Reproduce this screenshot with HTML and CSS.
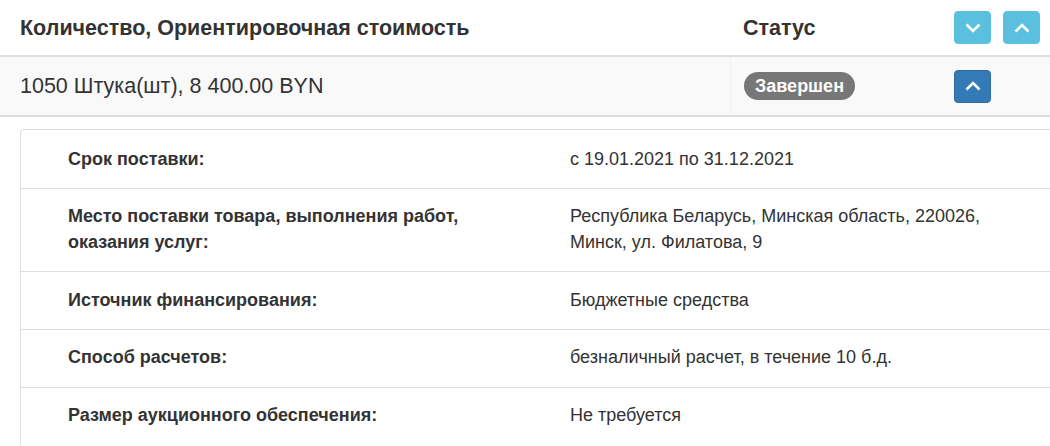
FILE: index.html
```html
<!DOCTYPE html>
<html lang="ru">
<head>
<meta charset="utf-8">
<link rel="stylesheet" href="styles.css">
</head>
<body>
<div class="lots">
  <div class="row head">
    <div class="c1">Количество, Ориентировочная стоимость</div>
    <div class="c2">Статус</div>
    <div class="c3">
      <button class="btn info" aria-label="Развернуть все">
        <svg width="16" height="10" viewBox="0 0 16 10"><path d="M1.5 1.5 L8 8 L14.5 1.5" fill="none" stroke="#fff" stroke-width="2.6"/></svg>
      </button>
      <button class="btn info" aria-label="Свернуть все">
        <svg width="16" height="10" viewBox="0 0 16 10"><path d="M1.5 8.5 L8 2 L14.5 8.5" fill="none" stroke="#fff" stroke-width="2.6"/></svg>
      </button>
    </div>
  </div>
  <div class="row lot">
    <div class="c1">1050 Штука(шт), 8 400.00 BYN</div>
    <div class="c2"><span class="badge">Завершен</span></div>
    <div class="c3">
      <button class="btn primary" aria-label="Свернуть">
        <svg width="16" height="10" viewBox="0 0 16 10"><path d="M1.5 8.5 L8 2 L14.5 8.5" fill="none" stroke="#fff" stroke-width="2.6"/></svg>
      </button>
    </div>
  </div>
  <div class="details">
    <div class="drow">
      <div class="label">Срок поставки:</div>
      <div class="value">с 19.01.2021 по 31.12.2021</div>
    </div>
    <div class="drow">
      <div class="label">Место поставки товара, выполнения работ, оказания услуг:</div>
      <div class="value">Республика Беларусь, Минская область, 220026, Минск, ул. Филатова, 9</div>
    </div>
    <div class="drow">
      <div class="label">Источник финансирования:</div>
      <div class="value">Бюджетные средства</div>
    </div>
    <div class="drow">
      <div class="label">Способ расчетов:</div>
      <div class="value">безналичный расчет, в течение 10 б.д.</div>
    </div>
    <div class="drow">
      <div class="label">Размер аукционного обеспечения:</div>
      <div class="value">Не требуется</div>
    </div>
  </div>
</div>
</body>
</html>
```

FILE: styles.css
```css
html, body {
  margin: 0;
  padding: 0;
  overflow: hidden;
  background: #fff;
}
body {
  font-family: "Liberation Sans", Arial, sans-serif;
  color: #333;
  width: 1050px;
}
.lots {
  width: 1050px;
}
.row {
  display: grid;
  grid-template-columns: 730px 215px 1fr;
  align-items: center;
}
.row .c1 { padding-left: 20px; }
.row .c2 { padding-left: 13px; }
.row .c3 { padding-left: 9px; display: flex; gap: 12px; }
.head {
  height: 55px;
  border-bottom: 2px solid #ddd;
  font-size: 21.5px;
  font-weight: bold;
}
.head .c1, .head .c2 { padding-top: 1px; }
.lot {
  height: 58px;
  background: #f9f9f9;
  border-bottom: 2px solid #ddd;
  font-size: 21.5px;
}
.lot .c2 { border-left: 1px solid #f2f2f2; align-self: stretch; display: flex; align-items: center; }
.btn {
  width: 37px;
  height: 33px;
  border: 1px solid transparent;
  border-radius: 4px;
  padding: 0;
  display: flex;
  align-items: center;
  justify-content: center;
  cursor: pointer;
}
.btn.info { background: #5bc0de; border-color: #5bc0de; }
.btn.primary { background: #337ab7; border-color: #2e6da4; }
.badge {
  display: inline-block;
  background: #777;
  color: #fff;
  font-weight: bold;
  font-size: 18px;
  line-height: 20px;
  padding: 4px 11px 4px 11px;
  border-radius: 14px;
}
.details {
  margin: 12px -20px 0 20px;
  border: 1px solid #ddd;
  border-radius: 4px;
  font-size: 18px;
  line-height: 1.42857;
}
.drow {
  display: grid;
  grid-template-columns: 502px 1fr;
  padding: 15.5px 0 15.5px 47px;
}
.drow:first-child {
  padding-top: 16.5px;
}
.drow:last-child {
  padding-bottom: 24px;
}
.drow + .drow {
  border-top: 1px solid #ddd;
}
.label {
  font-weight: bold;
  padding-right: 40px;
}
.value {
  padding-right: 60px;
}
```
